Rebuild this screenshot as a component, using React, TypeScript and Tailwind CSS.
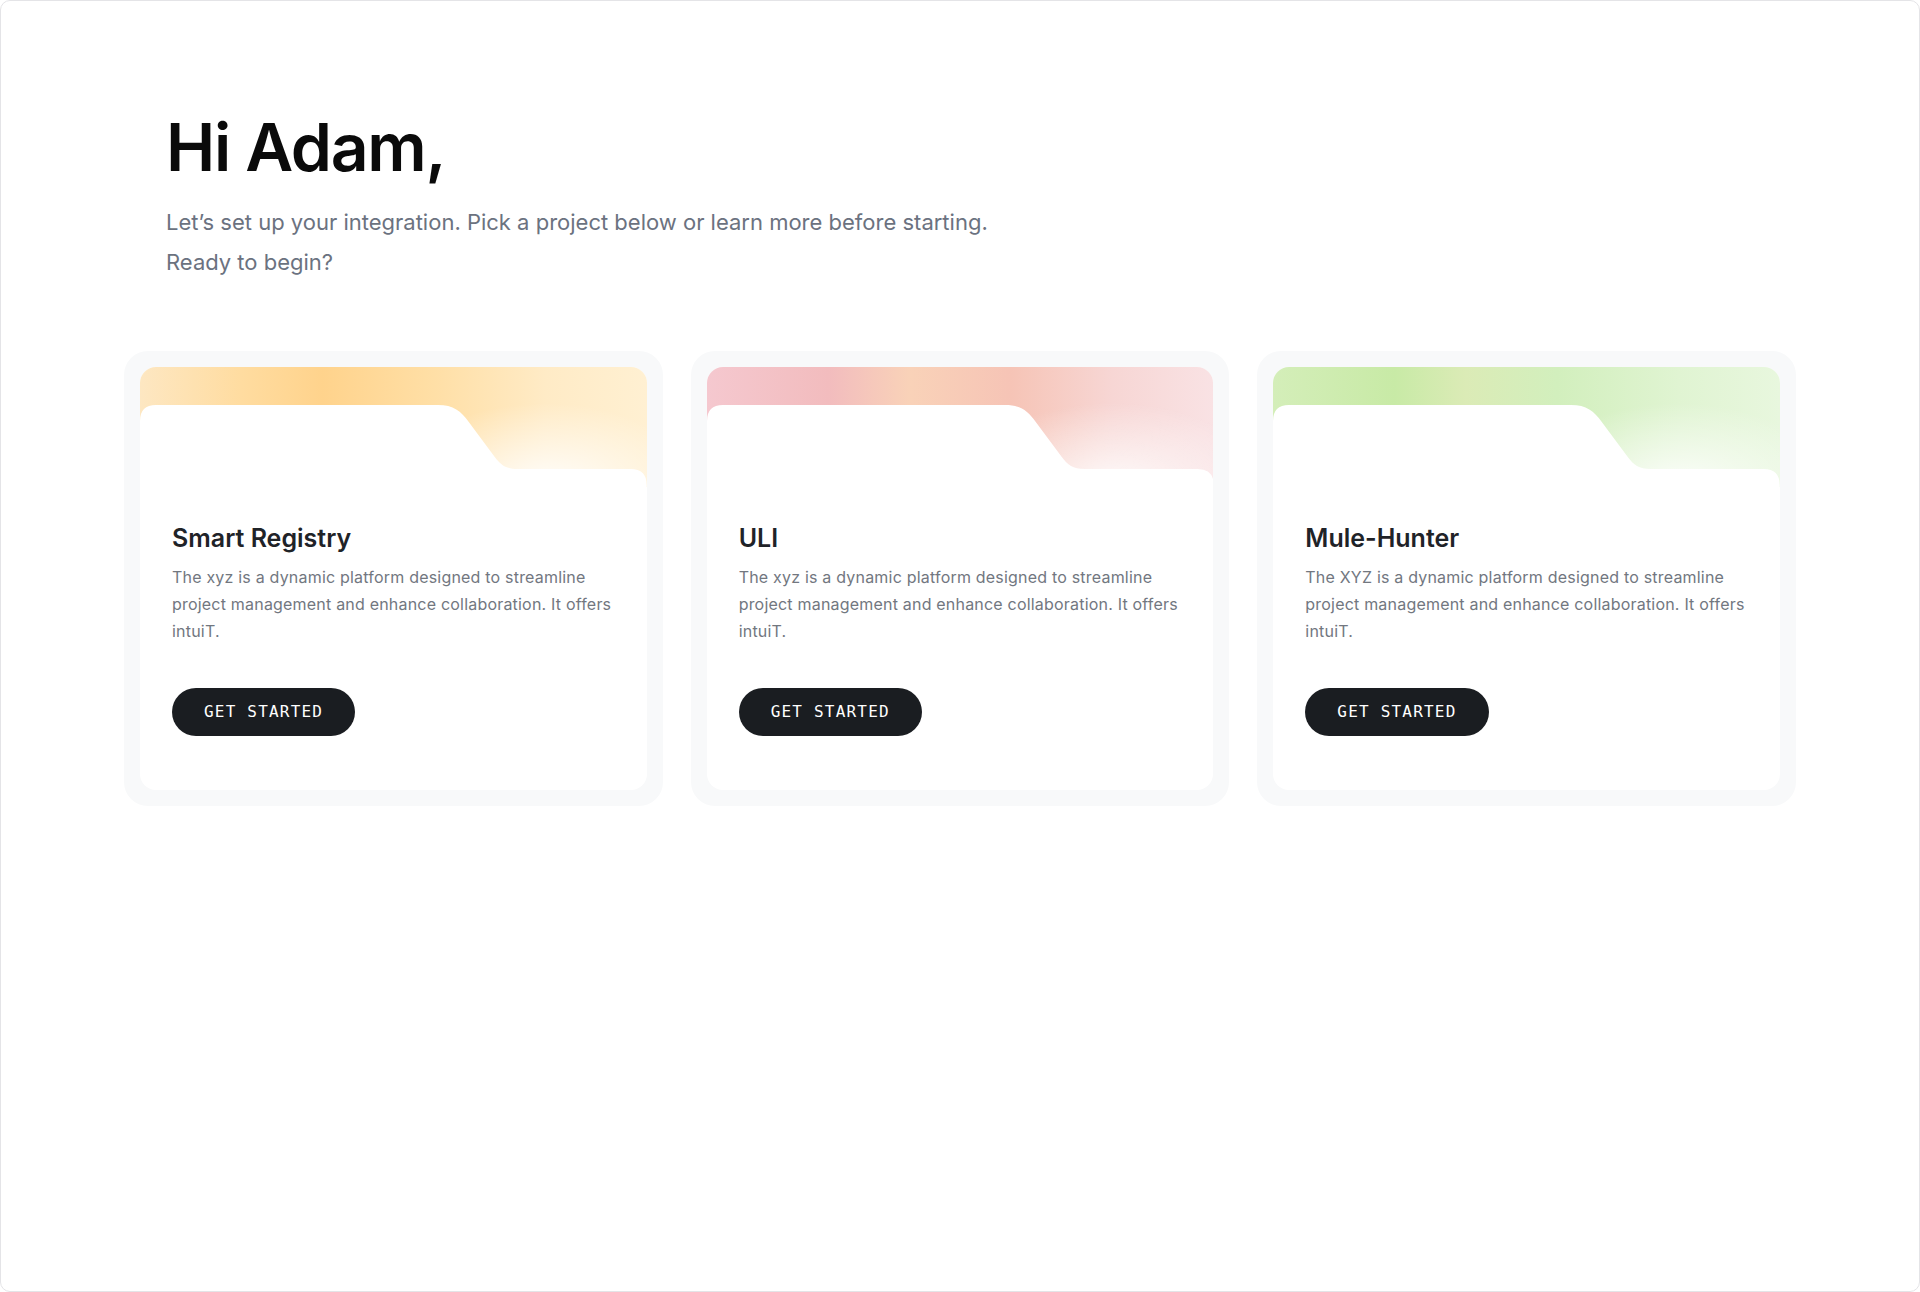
import React from "react";

type Project = {
  name: string;
  description: string;
  band: string;
};

const projects: Project[] = [
  {
    name: "Smart Registry",
    description:
      "The xyz is a dynamic platform designed to streamline project management and enhance collaboration. It offers intuiT.",
    band: "bg-[radial-gradient(ellipse_30%_70%_at_80%_100%,rgba(255,255,255,0.95),rgba(255,255,255,0)),linear-gradient(90deg,#fde7c2_0%,#ffdca0_20%,#ffd38c_36%,#ffdfa6_58%,#ffebc6_80%,#fff0d2_100%)]",
  },
  {
    name: "ULI",
    description:
      "The xyz is a dynamic platform designed to streamline project management and enhance collaboration. It offers intuiT.",
    band: "bg-[radial-gradient(ellipse_30%_70%_at_80%_100%,rgba(255,255,255,0.9),rgba(255,255,255,0)),linear-gradient(90deg,#f5c8cf_0%,#f2bcbe_24%,#f9d2b8_40%,#f6c4b6_60%,#f7d6d4_80%,#f9e2e4_100%)]",
  },
  {
    name: "Mule-Hunter",
    description:
      "The XYZ is a dynamic platform designed to streamline project management and enhance collaboration. It offers intuiT.",
    band: "bg-[radial-gradient(ellipse_30%_70%_at_80%_100%,rgba(255,255,255,0.9),rgba(255,255,255,0)),linear-gradient(90deg,#d4eeb9_0%,#c8eaa6_24%,#dbebb6_38%,#d2efbd_56%,#e0f4d2_80%,#e8f7de_100%)]",
  },
];

function FolderTop() {
  return (
    <svg
      className="absolute inset-0 w-full h-full"
      viewBox="0 0 507 120"
      preserveAspectRatio="none"
    >
      <path
        d="M0,120 L0,54 Q0,38 16,38 L298,38 C314,38 321,44 329,55 L355,90 C361,98 366,102 378,102 L491,102 Q507,102 507,118 L507,120 Z"
        fill="#ffffff"
      />
    </svg>
  );
}

function ProjectCard({ project }: { project: Project }) {
  return (
    <div className="rounded-[24px] bg-[#f8f9fa] p-4">
      <div className="rounded-[16px] bg-white overflow-hidden">
        <div className={`relative h-[120px] ${project.band}`}>
          <FolderTop />
        </div>
        <div className="px-8 pt-[37px] pb-[54px]">
          <h2 className="text-[25px] leading-[28px] font-semibold text-[#1f2328]">
            {project.name}
          </h2>
          <p className="mt-3 text-[16px] leading-[27px] tracking-[0.2px] text-[#72777f]">
            {project.description}
          </p>
          <button className="mt-[43px] h-12 px-8 inline-flex items-center rounded-full bg-[#1a1d21] text-white text-[16px] tracking-[1.2px] font-medium font-['DejaVu_Sans_Mono',monospace]">
            GET STARTED
          </button>
        </div>
      </div>
    </div>
  );
}

export default function App() {
  return (
    <div className="min-h-[1292px] w-full bg-white border border-[#e4e4e7] rounded-[10px] font-['Inter','Noto_Sans',sans-serif]">
      <div className="mx-auto w-[1672px] pt-[113px]">
        <div className="pl-[42px]">
          <h1 className="text-[66px] leading-none font-semibold tracking-[-0.02em] text-[#0a0a0a]">
            Hi Adam,
          </h1>
          <div className="mt-[22px] text-[22px] leading-[40px] text-[#6b7280]">
            <p>Let’s set up your integration. Pick a project below or learn more before starting.</p>
            <p>Ready to begin?</p>
          </div>
        </div>

        {/* Projects */}
        <div className="mt-[69px] grid grid-cols-3 gap-[28px]">
          {projects.map((p) => (
            <ProjectCard key={p.name} project={p} />
          ))}
        </div>
      </div>
    </div>
  );
}
